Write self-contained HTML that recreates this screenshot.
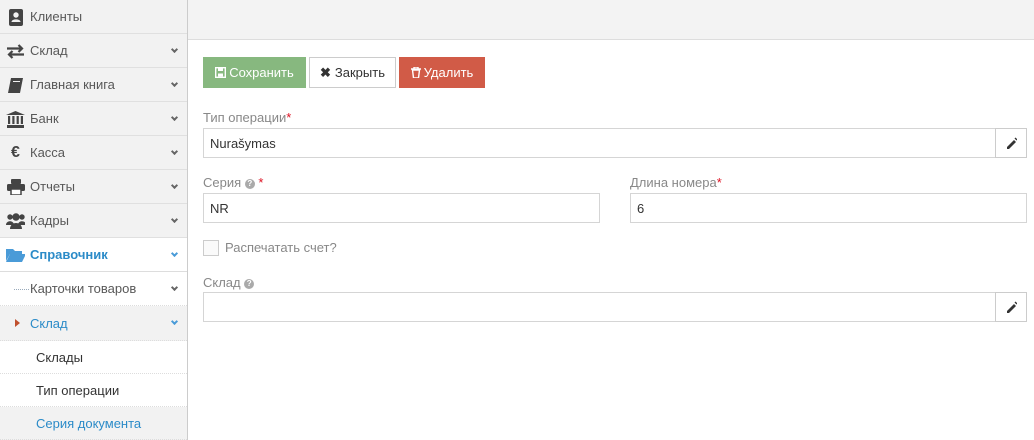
<!DOCTYPE html>
<html><head><meta charset="utf-8"><style>
*{box-sizing:border-box;margin:0;padding:0}
body{width:1034px;height:440px;overflow:hidden;font-family:"Liberation Sans",sans-serif;font-size:13px;color:#393939;background:#fff;position:relative}
.sb{position:absolute;left:0;top:0;width:188px;height:440px;background:#f2f2f2;border-right:1px solid #ccc}
.it{position:absolute;left:0;width:187px;height:34px;border-bottom:1px solid #e0e0e0;display:flex;align-items:center;padding-left:30px;font-size:13px;color:#585858}
.ic{position:absolute;left:6px;top:8px;width:19px;height:18px;display:flex;align-items:center;justify-content:center;color:#444}
.ch{position:absolute;right:10px;top:13px;width:5px;height:5px;border-right:2px solid #666;border-bottom:2px solid #666;transform:rotate(45deg)}
.sub{position:absolute;left:0;width:187px;border-bottom:1px dotted #ddd;display:flex;align-items:center;font-size:13px}
.hdr{position:absolute;left:188px;top:0;right:0;height:40px;background:#f3f3f3;border-bottom:1px solid #ddd}
.btn{position:absolute;top:57px;height:31px;display:flex;align-items:center;justify-content:center;font-size:13px}
.lbl{position:absolute;color:#888;font-size:13px}
.req{color:#d12}
.inp{position:absolute;border:1px solid #d5d5d5;height:30px;padding-left:6px;display:flex;align-items:center;color:#333}
.add{position:absolute;border:1px solid #ccc;background:#fff;width:32px;height:30px;display:flex;align-items:center;justify-content:center}
.q{display:inline-block;width:10px;height:10px;border-radius:50%;background:#aaa;color:#fff;font-size:8px;line-height:10px;text-align:center;font-weight:bold;vertical-align:1px}
</style></head><body>
<div class="sb">
<div class="it" style="top:0"><span class="ic"><svg width="16" height="17"><rect x="1" y="0" width="14" height="17" rx="2" fill="#444"/><circle cx="8" cy="6" r="2.7" fill="#f2f2f2"/><path d="M3.5 13c0-3.5 9-3.5 9 0z" fill="#f2f2f2"/></svg></span>Клиенты</div>
<div class="it" style="top:34px"><span class="ic"><svg width="19" height="15"><path d="M1 4.5h15M12.5 1l3.5 3.5-3.5 3.5M18 10.5H3M6.5 7L3 10.5 6.5 14" stroke="#444" stroke-width="2.2" fill="none"/></svg></span>Склад<i class="ch"></i></div>
<div class="it" style="top:68px"><span class="ic"><svg width="17" height="17"><path d="M4 1h12l-3 15H1z" fill="#444"/><path d="M6 4.5h7" stroke="#f2f2f2"/></svg></span>Главная книга<i class="ch"></i></div>
<div class="it" style="top:102px"><span class="ic"><svg width="19" height="17"><path d="M9.5 0l9.5 4H0z M1 14h17v3H1z" fill="#444"/><rect x="2" y="5" width="2.2" height="8" fill="#444"/><rect x="6.3" y="5" width="2.2" height="8" fill="#444"/><rect x="10.6" y="5" width="2.2" height="8" fill="#444"/><rect x="14.8" y="5" width="2.2" height="8" fill="#444"/></svg></span>Банк<i class="ch"></i></div>
<div class="it" style="top:136px"><span class="ic" style="font-weight:bold;font-size:16px">€</span>Касса<i class="ch"></i></div>
<div class="it" style="top:170px"><span class="ic"><svg width="18" height="16"><rect x="4" y="0" width="10" height="5" rx="1" fill="#444"/><rect x="0" y="5" width="18" height="7" rx="1.5" fill="#444"/><rect x="4" y="10" width="10" height="6" fill="#fff" stroke="#444" stroke-width="1.5"/></svg></span>Отчеты<i class="ch"></i></div>
<div class="it" style="top:204px"><span class="ic"><svg width="20" height="16"><circle cx="4" cy="4" r="2.7" fill="#444"/><circle cx="16" cy="4" r="2.7" fill="#444"/><circle cx="10" cy="4" r="3.7" fill="#444"/><path d="M0 12c0-5 8-5 8 0zM12 12c0-5 8-5 8 0z" fill="#444"/><path d="M4 16c0-8 12-8 12 0z" fill="#444"/></svg></span>Кадры<i class="ch"></i></div>
<div class="it" style="top:238px;background:#fff;color:#2b8bc8;font-weight:bold;border-bottom:1px solid #ddd"><span class="ic"><svg width="20" height="14"><path d="M0 1h7l2 2h7v3H4L0 13z" fill="#4a9bd8"/><path d="M4 6h16l-4 8H0z" fill="#4a9bd8"/></svg></span>Справочник<i class="ch" style="border-color:#4a9bd8"></i></div>
<div style="position:absolute;left:13px;top:272px;height:168px;border-left:1px dotted #9ab;"></div>
<div class="sub" style="top:272px;height:34px;background:#fff;padding-left:30px;color:#585858"><span style="position:absolute;left:14px;top:17px;width:15px;border-top:1px dotted #9ab"></span>Карточки товаров<i class="ch"></i></div>
<div class="sub" style="top:306px;height:35px;background:#f2f2f2;padding-left:30px;color:#2b8bc8"><span style="position:absolute;left:15px;top:13px;border-left:5px solid #c0502e;border-top:4px solid transparent;border-bottom:4px solid transparent"></span>Склад<i class="ch" style="border-color:#4a9bd8"></i></div>
<div class="sub" style="top:341px;height:33px;background:#fff;padding-left:36px;color:#333">Склады</div>
<div class="sub" style="top:374px;height:33px;background:#fff;padding-left:36px;color:#333">Тип операции</div>
<div class="sub" style="top:407px;height:33px;background:#f2f2f2;padding-left:36px;color:#2b8bc8">Серия документа</div>
</div>
<div class="hdr"></div>
<div class="btn" style="left:203px;width:103px;background:#87b87f;color:#fff"><svg width="11" height="11" style="margin-right:3px"><rect x="0.7" y="0.7" width="9.6" height="9.6" fill="none" stroke="#fff" stroke-width="1.4"/><rect x="3" y="1" width="5" height="3" fill="#fff"/><rect x="3" y="6.5" width="5" height="3" fill="#fff"/></svg>Сохранить</div>
<div class="btn" style="left:309px;width:87px;background:#fff;border:1px solid #ccc;color:#333"><b style="margin-right:4px">✖</b>Закрыть</div>
<div class="btn" style="left:399px;width:86px;background:#d15b47;color:#fff"><svg width="10" height="11" style="margin-right:3px"><path d="M0 2h10M3 2V0h4v2M1.5 3h7l-1 8h-5z" stroke="#fff" fill="none" stroke-width="1.4"/></svg>Удалить</div>
<div class="lbl" style="left:203px;top:110px">Тип операции<span class="req">*</span></div>
<div class="inp" style="left:203px;top:128px;width:793px">Nurašymas</div>
<div class="add" style="left:995px;top:128px"><svg width="12" height="12"><path d="M2 10l7-7 2 2-7 7H2z" fill="#333"/><path d="M9.5 1.5l1-1 2 2-1 1z" fill="#333"/></svg></div>
<div class="lbl" style="left:203px;top:175px">Серия <span class="q">?</span> <span class="req">*</span></div>
<div class="inp" style="left:203px;top:193px;width:397px">NR</div>
<div class="lbl" style="left:630px;top:175px">Длина номера<span class="req">*</span></div>
<div class="inp" style="left:630px;top:193px;width:397px">6</div>
<div style="position:absolute;left:203px;top:240px;width:16px;height:16px;border:1px solid #ccc;background:#fafafa"></div>
<div class="lbl" style="left:225px;top:240px">Распечатать счет?</div>
<div class="lbl" style="left:203px;top:275px">Склад <span class="q">?</span></div>
<div class="inp" style="left:203px;top:292px;width:793px"></div>
<div class="add" style="left:995px;top:292px"><svg width="12" height="12"><path d="M2 10l7-7 2 2-7 7H2z" fill="#333"/><path d="M9.5 1.5l1-1 2 2-1 1z" fill="#333"/></svg></div>
</body></html>
